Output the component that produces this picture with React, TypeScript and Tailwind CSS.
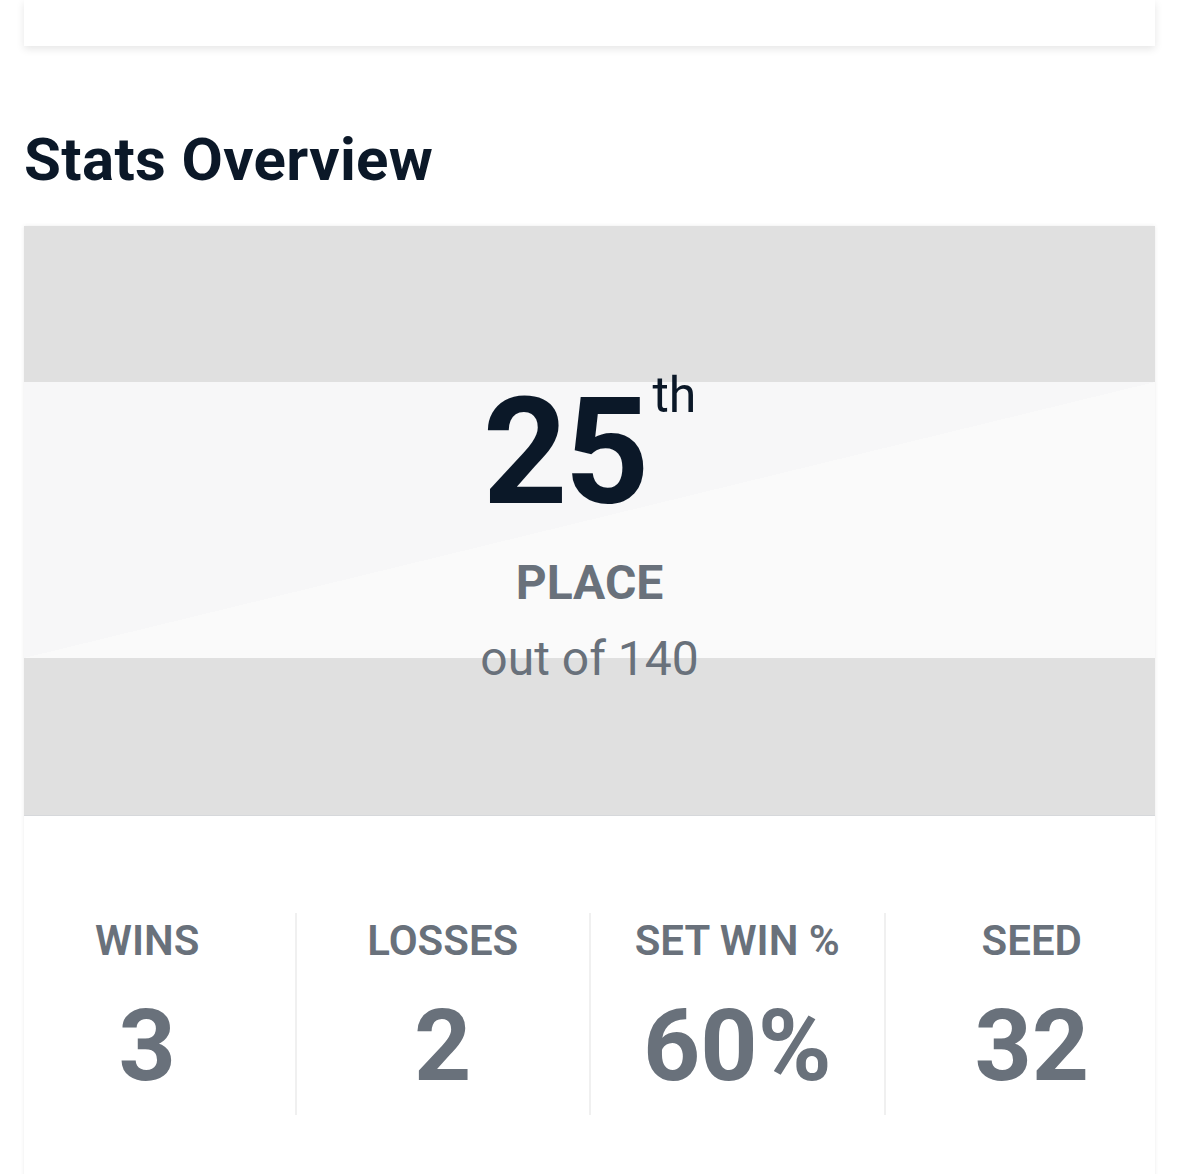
import React from "react";

const stats = [
  { label: "WINS", value: "3" },
  { label: "LOSSES", value: "2" },
  { label: "SET WIN %", value: "60%" },
  { label: "SEED", value: "32" },
];

export default function App() {
  return (
    <div className="w-[1179px] h-[1174px] overflow-hidden bg-white font-['Roboto',sans-serif]">
      <div className="mx-6 h-[46px] bg-white shadow-[0_3px_8px_rgba(0,0,0,0.10)]" />
      <h2 className="mx-6 mt-[78px] text-[60px] font-bold leading-[72px] tracking-[0.35px] text-[#0b1828]">
        Stats Overview
      </h2>
      <div className="mx-6 mt-[30px] h-[1000px] bg-white shadow-[0_0_4px_rgba(0,0,0,0.08)]">
        <div className="relative flex h-[590px] flex-col items-center border-b border-[#d6d8db] bg-[#e0e0e0] pt-[153px]">
          <div className="absolute inset-x-0 top-[156px] h-[276px] bg-[linear-gradient(to_bottom_right,#f7f7f8_50%,#fafafa_50%)]" />
          <div className="relative flex flex-col items-center">
            <div className="flex items-start text-[#0b1828]">
              <span className="text-[148px] font-bold leading-none tracking-[-3px]">25</span>
              <span className="ml-[6px] mt-[-9px] text-[50px] font-normal leading-none">th</span>
            </div>
            <div className="mt-[32px] text-[48px] font-bold leading-none text-[#69717b]">PLACE</div>
            <div className="mt-[28px] text-[48px] font-normal leading-none text-[#69717b]">out of 140</div>
          </div>
        </div>
        <div className="-mx-6 grid w-[1178px] grid-cols-4 pt-[97px]">
          {stats.map((s, i) => (
            <div
              key={s.label}
              className={
                "flex h-[202px] flex-col items-center pt-[7px] text-[#69717b] " +
                (i > 0 ? "border-l-2 border-[#f0f0f0]" : "")
              }
            >
              <div className="text-[42px] font-semibold leading-none">{s.label}</div>
              <div className="mt-[34px] text-[100px] font-bold leading-none">{s.value}</div>
            </div>
          ))}
        </div>
      </div>
    </div>
  );
}
